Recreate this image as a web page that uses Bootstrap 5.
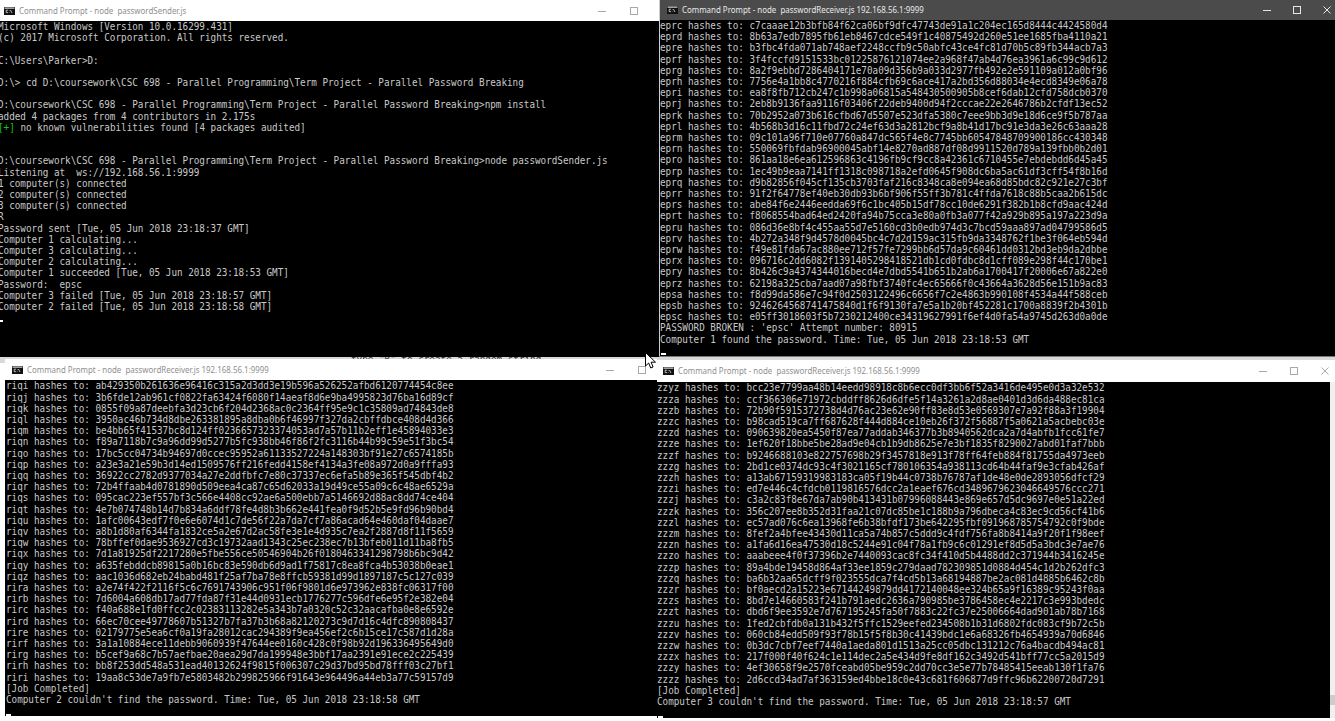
<!DOCTYPE html>
<html lang="en">
<head>
<meta charset="utf-8">
<title>Parallel Password Breaking</title>
<link href="https://cdn.jsdelivr.net/npm/bootstrap@5.3.0/dist/css/bootstrap.min.css" rel="stylesheet">
<style>
html,body{margin:0;background:#fff;overflow:hidden}
.desk{position:relative;width:1335px;height:721px;background:#fff;overflow:hidden}
.back-band{position:absolute;left:0;top:355px;width:1335px;height:8px;background:#d9d9d9;border-top:2px solid #777}
.back-text{position:absolute;left:351px;top:353px;font:9.3px/11.2px "DejaVu Sans Mono",monospace;color:#333;white-space:pre}
.cwin{position:absolute;overflow:hidden;background:#000}
.w1{left:0;top:0;width:659px;height:357px}
.w2{left:659px;top:0;width:676px;height:356px;border-left:1px solid #ccc}
.w3{left:5px;top:359px;width:652px;height:357px}
.w4{left:657px;top:360px;width:678px;height:358px}
.tbar{background:#fff;color:#8f8f8f;font:9.6px/1 "Noto Sans",sans-serif;white-space:pre;flex:none}
.tbar span{display:inline-block;transform:scaleX(.825);transform-origin:left center;width:178px}
.w1 .tbar{height:21px;padding-left:4px}
.w2 .tbar{height:20px;padding-left:7px;background:#4b4b4b;color:#e9e9e9}
.w3 .tbar{height:21.4px;padding-left:7px}
.w4 .tbar{height:22.4px;padding-left:6px}
.cmdico{width:11px;height:8px;flex:none;margin-right:4px}
.capb{color:#a8a8a8}
.capb svg{display:block;width:8px;height:8px}
.w2 .capb{color:#e6e6e6}
.w1 .capb{gap:24px;padding-right:21px}
.w2 .capb{gap:22px;padding-right:4px}
.w3 .capb{gap:24px;padding-right:11px}
.w4 .capb{gap:23px;padding-right:6px}
pre.cons{margin:0;font:10.2px/11.2px "DejaVu Sans Mono",monospace;color:#c8c8c8;overflow:hidden;background:#000;flex:1 1 auto;white-space:pre;width:112%;transform:scaleX(.912);transform-origin:left top}
.w1 pre.cons{margin-left:-2px}
.w2 pre.cons{margin-left:0}
.w3 pre.cons{margin-left:1px}
.grn{color:#16c60c}
.curs{display:block;background:#fff;height:2px;position:absolute}
.w1 .curs{left:0;top:320px;width:3px}
.w2 .curs{left:1px;top:353px;width:5px}
.w3 .curs{left:1px;top:355px;width:5px}
.w4 .curs{left:1px;top:356px;width:5px}
.sbar{position:absolute;right:0;top:22px;bottom:0;width:5px;background:#f0f0f0}
.sthumb{position:absolute;left:0;right:0;bottom:13px;height:10px;background:#cdcdcd}
.mptr{position:absolute;left:645px;top:352px;width:11px;height:17px}
</style>
</head>
<body>
<div class="desk">
  <div class="back-band"></div>
  <div class="back-text">type "R" to create a random string</div>

  <div class="cwin w1 d-flex flex-column">
    <div class="tbar d-flex align-items-center">
      <svg class="cmdico" viewBox="0 0 11 8"><rect width="11" height="8" fill="#111"/><rect x=".5" y=".5" width="10" height="1.2" fill="#ddd"/><path d="M4 3.2H2.2v2.4H4M5.2 3.4v.5M5.2 5v.5M6.4 3l1.6 3" stroke="#ddd" stroke-width=".8" fill="none"/></svg>
      <span>Command Prompt - node  passwordSender.js</span>
      <div class="capb d-flex align-items-center ms-auto">
        <svg viewBox="0 0 8 8"><path d="M0 4.5H8" stroke="currentColor"/></svg>
        <svg viewBox="0 0 8 8"><rect x=".5" y=".5" width="7" height="7" fill="none" stroke="currentColor"/></svg>
      </div>
    </div>
<pre class="cons">Microsoft Windows [Version 10.0.16299.431]
(c) 2017 Microsoft Corporation. All rights reserved.

C:\Users\Parker&gt;D:

D:\&gt; cd D:\coursework\CSC 698 - Parallel Programming\Term Project - Parallel Password Breaking

D:\coursework\CSC 698 - Parallel Programming\Term Project - Parallel Password Breaking&gt;npm install
added 4 packages from 4 contributors in 2.175s
<span class="grn">[+]</span> no known vulnerabilities found [4 packages audited]


D:\coursework\CSC 698 - Parallel Programming\Term Project - Parallel Password Breaking&gt;node passwordSender.js
Listening at  ws://192.168.56.1:9999
1 computer(s) connected
2 computer(s) connected
3 computer(s) connected
R
Password sent [Tue, 05 Jun 2018 23:18:37 GMT]
Computer 1 calculating...
Computer 3 calculating...
Computer 2 calculating...
Computer 1 succeeded [Tue, 05 Jun 2018 23:18:53 GMT]
Password:  epsc
Computer 3 failed [Tue, 05 Jun 2018 23:18:57 GMT]
Computer 2 failed [Tue, 05 Jun 2018 23:18:58 GMT]</pre>
    <i class="curs"></i>
  </div>

  <div class="cwin w2 d-flex flex-column">
    <div class="tbar d-flex align-items-center">
      <svg class="cmdico" viewBox="0 0 11 8"><rect width="11" height="8" fill="#111"/><rect x=".5" y=".5" width="10" height="1.2" fill="#ddd"/><path d="M4 3.2H2.2v2.4H4M5.2 3.4v.5M5.2 5v.5M6.4 3l1.6 3" stroke="#ddd" stroke-width=".8" fill="none"/></svg>
      <span>Command Prompt - node  passwordReceiver.js 192.168.56.1:9999</span>
      <div class="capb d-flex align-items-center ms-auto">
        <svg viewBox="0 0 8 8"><path d="M0 4.5H8" stroke="currentColor"/></svg>
        <svg viewBox="0 0 8 8"><rect x=".5" y=".5" width="7" height="7" fill="none" stroke="currentColor"/></svg>
        <svg viewBox="0 0 8 8"><path d="M.5.5l7 7M7.5.5l-7 7" stroke="currentColor" fill="none"/></svg>
      </div>
    </div>
<pre class="cons">eprc hashes to: c7caaae12b3bfb84f62ca06bf9dfc47743de91a1c204ec165d8444c4424580d4
eprd hashes to: 8b63a7edb7895fb61eb8467cdce549f1c40875492d260e51ee1685fba4110a21
epre hashes to: b3fbc4fda071ab748aef2248ccfb9c50abfc43ce4fc81d70b5c89fb344acb7a3
eprf hashes to: 3f4fccfd9151533bc01225876121074ee2a968f47ab4d76ea3961a6c99c9d612
eprg hashes to: 8a2f9ebbd7286404171e70a09d356b9a033d2977fb492e2e591109a012a0bf96
eprh hashes to: 7756e4a1bb8c4770216f884cfb69c6ace417a2bd356d88034e4ecd8349e06a78
epri hashes to: ea8f8fb712cb247c1b998a06815a548430500905b8cef6dab12cfd758dcb0370
eprj hashes to: 2eb8b9136faa9116f03406f22deb9400d94f2cccae22e2646786b2cfdf13ec52
eprk hashes to: 70b2952a073b616cfbd67d5507e523dfa5380c7eee9bb3d9e18d6ce9f5b787aa
eprl hashes to: 4b568b3d16c11fbd72c24ef63d3a2812bcf9a8b41d17bc91e3da3e26c63aaa28
eprm hashes to: 09c101a96f710e07760a847dc565f4e8c7745bb60547848709900186cc430348
eprn hashes to: 550069fbfdab96900045abf14e8270ad887df08d9911520d789a139fbb0b2d01
epro hashes to: 861aa18e6ea612596863c4196fb9cf9cc8a42361c6710455e7ebdebdd6d45a45
eprp hashes to: 1ec49b9eaa7141ff1318c098718a2efd0645f908dc6ba5ac61df3cff54f8b16d
eprq hashes to: d9b82856f045cf135cb3703faf216c8348ca8e094ea68d85bdc82c921e27c3bf
eprr hashes to: 91f2f64778ef40eb30db93b6bf906f55ff3b781c4ffda7618c88b5caa2b615dc
eprs hashes to: abe84f6e2446eedda69f6c1bc405b15df78cc10de6291f382b1b8cfd9aac424d
eprt hashes to: f8068554bad64ed2420fa94b75cca3e80a0fb3a077f42a929b895a197a223d9a
epru hashes to: 086d36e8bf4c455aa55d7e5160cd3b0edb974d3c7bcd59aaa897ad04799586d5
eprv hashes to: 4b272a348f9d4578d0045bc4c7d2d159ac315fb9da3348762f1be3f064eb594d
eprw hashes to: f49e81fda67ac880ee712f57fe7299bb6d57da9c60461dd0312bd3eb9da2dbbe
eprx hashes to: 096716c2dd6082f1391405298418521db1cd0fdbc8d1cff089e298f44c170be1
epry hashes to: 8b426c9a4374344016becd4e7dbd5541b651b2ab6a1700417f20006e67a822e0
eprz hashes to: 62198a325cba7aad07a98fbf3740fc4ec65666f0c43664a3628d56e151b9ac83
epsa hashes to: f8d99da586e7c94f0d2503122496c6656f7c2e4863b990108f4534a44f588ceb
epsb hashes to: 9246264568741475840d1f6f9130fa7e5a1b20bf452281c1700a8839f2b4301b
epsc hashes to: e05ff3018603f5b7230212400ce34319627991f6ef4d0fa54a9745d263d0a0de
PASSWORD BROKEN : 'epsc' Attempt number: 80915
Computer 1 found the password. Time: Tue, 05 Jun 2018 23:18:53 GMT</pre>
    <i class="curs"></i>
  </div>

  <div class="cwin w3 d-flex flex-column">
    <div class="tbar d-flex align-items-center">
      <svg class="cmdico" viewBox="0 0 11 8"><rect width="11" height="8" fill="#111"/><rect x=".5" y=".5" width="10" height="1.2" fill="#ddd"/><path d="M4 3.2H2.2v2.4H4M5.2 3.4v.5M5.2 5v.5M6.4 3l1.6 3" stroke="#ddd" stroke-width=".8" fill="none"/></svg>
      <span>Command Prompt - node  passwordReceiver.js 192.168.56.1:9999</span>
      <div class="capb d-flex align-items-center ms-auto">
        <svg viewBox="0 0 8 8"><path d="M0 4.5H8" stroke="currentColor"/></svg>
        <svg viewBox="0 0 8 8"><rect x=".5" y=".5" width="7" height="7" fill="none" stroke="currentColor"/></svg>
      </div>
    </div>
<pre class="cons">riqi hashes to: ab429350b261636e96416c315a2d3dd3e19b596a526252afbd6120774454c8ee
riqj hashes to: 3b6fde12ab961cf0822fa63424f6080f14aeaf8d6e9ba4995823d76ba16d89cf
riqk hashes to: 0855f09a87deebfa3d23cb6f204d2368ac0c2364ff95e9c1c35809ad74843de8
riql hashes to: 3950ac46b734d8dbe263381895a8dba0b6f46997f327da2cbffdbce408d4d366
riqm hashes to: be4bb65f41537bc8d124ff0236657323374053ad7a57b11b2eff1e45894033e3
riqn hashes to: f89a7118b7c9a96dd99d5277b5fc938bb46f86f2fc3116b44b99c59e51f3bc54
riqo hashes to: 17bc5cc04734b94697d0ccec95952a61133527224a148303bf91e27c6574185b
riqp hashes to: a23e3a21e59b3d14ed1509576ff216fedd4158ef4134a3fe08a972d0a9fffa93
riqq hashes to: 36922cc2782d9377034a27e2ddfbfc7e80c37337ec6efa5b89e365f545dbf4b2
riqr hashes to: 72b4ffaab4d0781890d509eea4ca87c65d62033a19d49ce55a09c6c48ae6529a
riqs hashes to: 095cac223ef557bf3c566e4408cc92ae6a500ebb7a5146692d88ac8dd74ce404
riqt hashes to: 4e7b074748b14d7b834a6ddf78fe4d8b3b662e441fea0f9d52b5e9fd96b90bd4
riqu hashes to: 1afc00643edf7f0e6e6074d1c7de56f22a7da7cf7a86acad64e460daf04daae7
riqv hashes to: a8b1d80af6344fa1832ce5a2e67d2ac58fe3e1e4d935c7ea2f2887d8f11f5659
riqw hashes to: 78bffef0dae9536927cd3c19732aad1343c25ec238ec7b13bfeb011d11ba8fb5
riqx hashes to: 7d1a81925df2217280e5fbe556ce50546904b26f0180463341298798b6bc9d42
riqy hashes to: a635febddcb89815a0b16bc83e590db6d9ad1f75817c8ea8fca4b53038b0eae1
riqz hashes to: aac1036d682eb24babd481f25af7ba78e8ffcb59381d99d1897187c5c127c039
rira hashes to: a2e74f422f2116f5c6c7691743906c951f06f9801d6e973962e838fc06317f00
rirb hashes to: 7d6004a608db17ad77fda87f31e44d0931ecb1776277c596dfe6e95f2e382e04
rirc hashes to: f40a688e1fd0ffcc2c02383113282e5a343b7a0320c52c32aacafba0e8e6592e
rird hashes to: 66ec70cee49778607b51327b7fa37b3b68a82120273c9d7d16c4dfc890808437
rire hashes to: 02179775e5ea6cf0a19fa28012cac294389f9ea456ef2c6b15ce17c587d1d28a
rirf hashes to: 3a1a10884ece11debb9060939f47644ee0160c428c0f98b92d196336495649d0
rirg hashes to: b5cef9a68c7b57aefbae20aea29d7da199948e3bbf17aa2391e91ece2c225439
rirh hashes to: bb8f253dd548a531ead40132624f9815f006307c29d37bd95bd78fff03c27bf1
riri hashes to: 19aa8c53de7a9fb7e5803482b299825966f91643e964496a44eb3a77c59157d9
[Job Completed]
Computer 2 couldn't find the password. Time: Tue, 05 Jun 2018 23:18:58 GMT</pre>
    <i class="curs"></i>
  </div>

  <div class="cwin w4 d-flex flex-column">
    <div class="tbar d-flex align-items-center">
      <svg class="cmdico" viewBox="0 0 11 8"><rect width="11" height="8" fill="#111"/><rect x=".5" y=".5" width="10" height="1.2" fill="#ddd"/><path d="M4 3.2H2.2v2.4H4M5.2 3.4v.5M5.2 5v.5M6.4 3l1.6 3" stroke="#ddd" stroke-width=".8" fill="none"/></svg>
      <span>Command Prompt - node  passwordReceiver.js 192.168.56.1:9999</span>
      <div class="capb d-flex align-items-center ms-auto">
        <svg viewBox="0 0 8 8"><path d="M0 4.5H8" stroke="currentColor"/></svg>
        <svg viewBox="0 0 8 8"><rect x=".5" y=".5" width="7" height="7" fill="none" stroke="currentColor"/></svg>
        <svg viewBox="0 0 8 8"><path d="M.5.5l7 7M7.5.5l-7 7" stroke="currentColor" fill="none"/></svg>
      </div>
    </div>
<pre class="cons">zzyz hashes to: bcc23e7799aa48b14eedd98918c8b6ecc0df3bb6f52a3416de495e0d3a32e532
zzza hashes to: ccf366306e71972cbddff8626d6dfe5f14a3261a2d8ae0401d3d6da488ec81ca
zzzb hashes to: 72b90f5915372738d4d76ac23e62e90ff83e8d53e0569307e7a92f88a3f19904
zzzc hashes to: b98cad519ca7ff687628f444d884ce10eb26f372f56887f5a0621a5acbebc03e
zzzd hashes to: 090639820ea5450f87ea77addab346377b3b8940562dca2a7d4abfb1fcc61fe7
zzze hashes to: 1ef620f18bbe5be28ad9e04cb1b9db8625e7e3bf1835f8290027abd01faf7bbb
zzzf hashes to: b9246688103e822757698b29f3457818e913f78ff64feb884f81755da4973eeb
zzzg hashes to: 2bd1ce0374dc93c4f3021165cf780106354a938113cd64b44faf9e3cfab426af
zzzh hashes to: a13ab67159319983183ca05f19b44c0738b76787af1de48e0de2893056dfcf29
zzzi hashes to: ed7e446c4cfdcb0119816576dcc2a1eaef676cd3489679623046649576ccc271
zzzj hashes to: c3a2c83f8e67da7ab90b413431b07996088443e869e657d5dc9697e0e51a22ed
zzzk hashes to: 356c207ee8b352d31faa21c07dc85be1c188b9a796dbeca4c83ec9cd56cf41b6
zzzl hashes to: ec57ad076c6ea13968fe6b38bfdf173be642295fbf091968785754792c0f9bde
zzzm hashes to: 8fef2a4bfee43430d11ca5a74b857c5ddd9c4fdf756fa8b8414a9f20f1f98eef
zzzn hashes to: a1fa6d16ea47530d18c5244e91c04f78a1fb9c6c01291ef8d5d5a3bdc3e7ae76
zzzo hashes to: aaabeee4f0f37396b2e7440093cac8fc34f410d5b4488dd2c371944b3416245e
zzzp hashes to: 89a4bde19458d864af33ee1859c279daad782309851d0884d454c1d2b262dfc3
zzzq hashes to: ba6b32aa65dcff9f023555dca7f4cd5b13a68194887be2ac081d4885b6462c8b
zzzr hashes to: bf0aecd2a15223e67144249879dd4172140048ee324b65a9f16389c95243f0aa
zzzs hashes to: 8bd7e14660583f241b791aedc2636a790985be3786458ec4e2217c3e993bdedc
zzzt hashes to: dbd6f9ee3592e7d767195245fa50f7883c22fc37e25006664dad901ab78b7168
zzzu hashes to: 1fed2cbfdb0a131b432f5ffc1529eefed234508b1b31d6802fdc083cf9b72c5b
zzzv hashes to: 060cb84edd509f93f78b15f5f8b30c41439bdc1e6a68326fb4654939a70d6846
zzzw hashes to: 0b3dc7cbf7eef7440a1aeda801d1513a25cc05dbc131212c76a4bacdb494ac81
zzzx hashes to: 217f000f40f624c1e114dec2a5e434d9fe8df162c3492d541bff77cc5a2015d9
zzzy hashes to: 4ef30658f9e2570fceabd05be959c2dd70cc3e5e77b78485415eeab130f1fa76
zzzz hashes to: 2d6ccd34ad7af363159ed4bbe18c0e43c681f606877d9ffc96b62200720d7291
[Job Completed]
Computer 3 couldn't find the password. Time: Tue, 05 Jun 2018 23:18:57 GMT</pre>
    <div class="sbar"><div class="sthumb"></div></div>
    <i class="curs"></i>
  </div>

  <svg class="mptr" viewBox="0 0 11 17"><path d="M.5.5V14l3.2-3 2 5 2.4-1-2-4.8h4.4z" fill="#fff" stroke="#000"/></svg>
</div>
<script src="https://cdn.jsdelivr.net/npm/bootstrap@5.3.0/dist/js/bootstrap.bundle.min.js"></script>
</body>
</html>
